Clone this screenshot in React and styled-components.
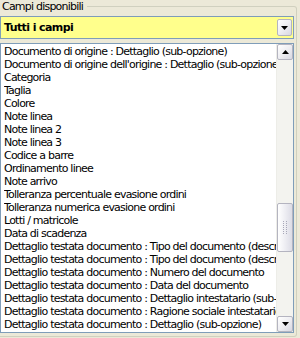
import React from 'react'
import styled, { createGlobalStyle } from 'styled-components'

const items = [
    "Documento di origine : Dettaglio (sub-opzione)",
    "Documento di origine dell'origine : Dettaglio (sub-opzione)",
    "Categoria",
    "Taglia",
    "Colore",
    "Note linea",
    "Note linea 2",
    "Note linea 3",
    "Codice a barre",
    "Ordinamento linee",
    "Note arrivo",
    "Tolleranza percentuale evasione ordini",
    "Tolleranza numerica evasione ordini",
    "Lotti / matricole",
    "Data di scadenza",
    "Dettaglio testata documento : Tipo del documento (descrizione)",
    "Dettaglio testata documento : Tipo del documento (descrizione breve)",
    "Dettaglio testata documento : Numero del documento",
    "Dettaglio testata documento : Data del documento",
    "Dettaglio testata documento : Dettaglio intestatario (sub-opzione)",
    "Dettaglio testata documento : Ragione sociale intestatario",
    "Dettaglio testata documento : Dettaglio (sub-opzione)",
]

const Arrow = ({ up }) => (
    <svg width="7" height="4" viewBox="0 0 7 4">
        {up
            ? <polygon points="0,4 7,4 3.5,0" fill="#000" />
            : <polygon points="0,0 7,0 3.5,4" fill="#000" />}
    </svg>
)

const Grip = () => (
    <svg width="6" height="14" viewBox="0 0 6 14">
        {[0, 1, 2, 3, 4, 5, 6].map(r =>
            [0, 1].map(c => (
                <rect key={r + "-" + c} x={c * 3 + 1} y={r * 2} width="1" height="1" fill="#A8A8B8" />
            ))
        )}
    </svg>
)

const App = () => {
    return (
        <>
            <Global />
            <Group>
                <Legend>Campi disponibili</Legend>
                <Combo>
                    <ComboText>Tutti i campi</ComboText>
                    <ScrollButton as="div" $combo><Arrow /></ScrollButton>
                </Combo>
                <ListBox>
                    <Items>
                        {items.map(i => <Item key={i}>{i}</Item>)}
                    </Items>
                    <ScrollBar>
                        <ScrollButton><Arrow up /></ScrollButton>
                        <Track>
                            <Thumb style={{ marginTop: 143 }}><Grip /></Thumb>
                        </Track>
                        <ScrollButton><Arrow /></ScrollButton>
                    </ScrollBar>
                </ListBox>
            </Group>
        </>
    )
}

export default App

const Global = createGlobalStyle`
body {
    margin: 0;
    background: #ECE9D8;
    font-family: "DejaVu Sans", Verdana, sans-serif;
    font-size: 11px;
    color: #000;
}
`

const Group = styled.fieldset`
width: 297px;
height: 337px;
margin: 0;
padding: 3px 0 3px 0;
border: 1px solid #D0D0BF;
border-left: none;
border-radius: 0 3px 3px 0;
display: flex;
flex-direction: column;
box-sizing: border-box;
`

const Legend = styled.legend`
padding: 0 4px 0 2px;
margin: 0;
line-height: 13px;
font-size: 11px;
letter-spacing: -0.78px;
color: #000;
`

const Combo = styled.div`
width: 294px;
height: 23px;
flex-shrink: 0;
box-sizing: border-box;
border: 1px solid #7F9DB9;
background: #FFFF8C;
display: flex;
align-items: center;
padding: 0 1px 0 3px;
`

const ComboText = styled.div`
flex: 1;
font-weight: bold;
font-size: 11px;
letter-spacing: -0.6px;
`

const ListBox = styled.div`
margin-top: 4px;
width: 294px;
height: 290px;
flex-shrink: 0;
box-sizing: border-box;
border: 1px solid #7F9DB9;
background: #fff;
display: flex;
`

const Items = styled.div`
flex: 1;
min-width: 0;
overflow: hidden;
padding: 1px 0 0 3px;
`

const Item = styled.div`
height: 13px;
line-height: 13px;
white-space: nowrap;
overflow: hidden;
letter-spacing: -0.78px;
`

const ScrollBar = styled.div`
width: 16px;
display: flex;
flex-direction: column;
background: #F3F3EF;
border-left: 1px solid #EDEDE8;
`

const ScrollButton = styled.button`
width: ${({ $combo }) => $combo ? "15px" : "16px"};
height: ${({ $combo }) => $combo ? "17px" : "16px"};
flex-shrink: 0;
padding: 0;
margin: 0;
box-sizing: border-box;
border: 1px solid #B4B4C0;
border-radius: 2px;
background: linear-gradient(135deg, #FFFFFF 0%, #EEEEF2 50%, #D8D8E2 100%);
display: flex;
align-items: center;
justify-content: center;
`

const Track = styled.div`
flex: 1;
display: flex;
flex-direction: column;
`

const Thumb = styled.div`
height: 49px;
box-sizing: border-box;
border: 1px solid #B4B4C0;
border-radius: 2px;
background: linear-gradient(90deg, #FFFFFF 0%, #EEEEF3 50%, #DCDCE6 100%);
display: flex;
align-items: center;
justify-content: center;
`
